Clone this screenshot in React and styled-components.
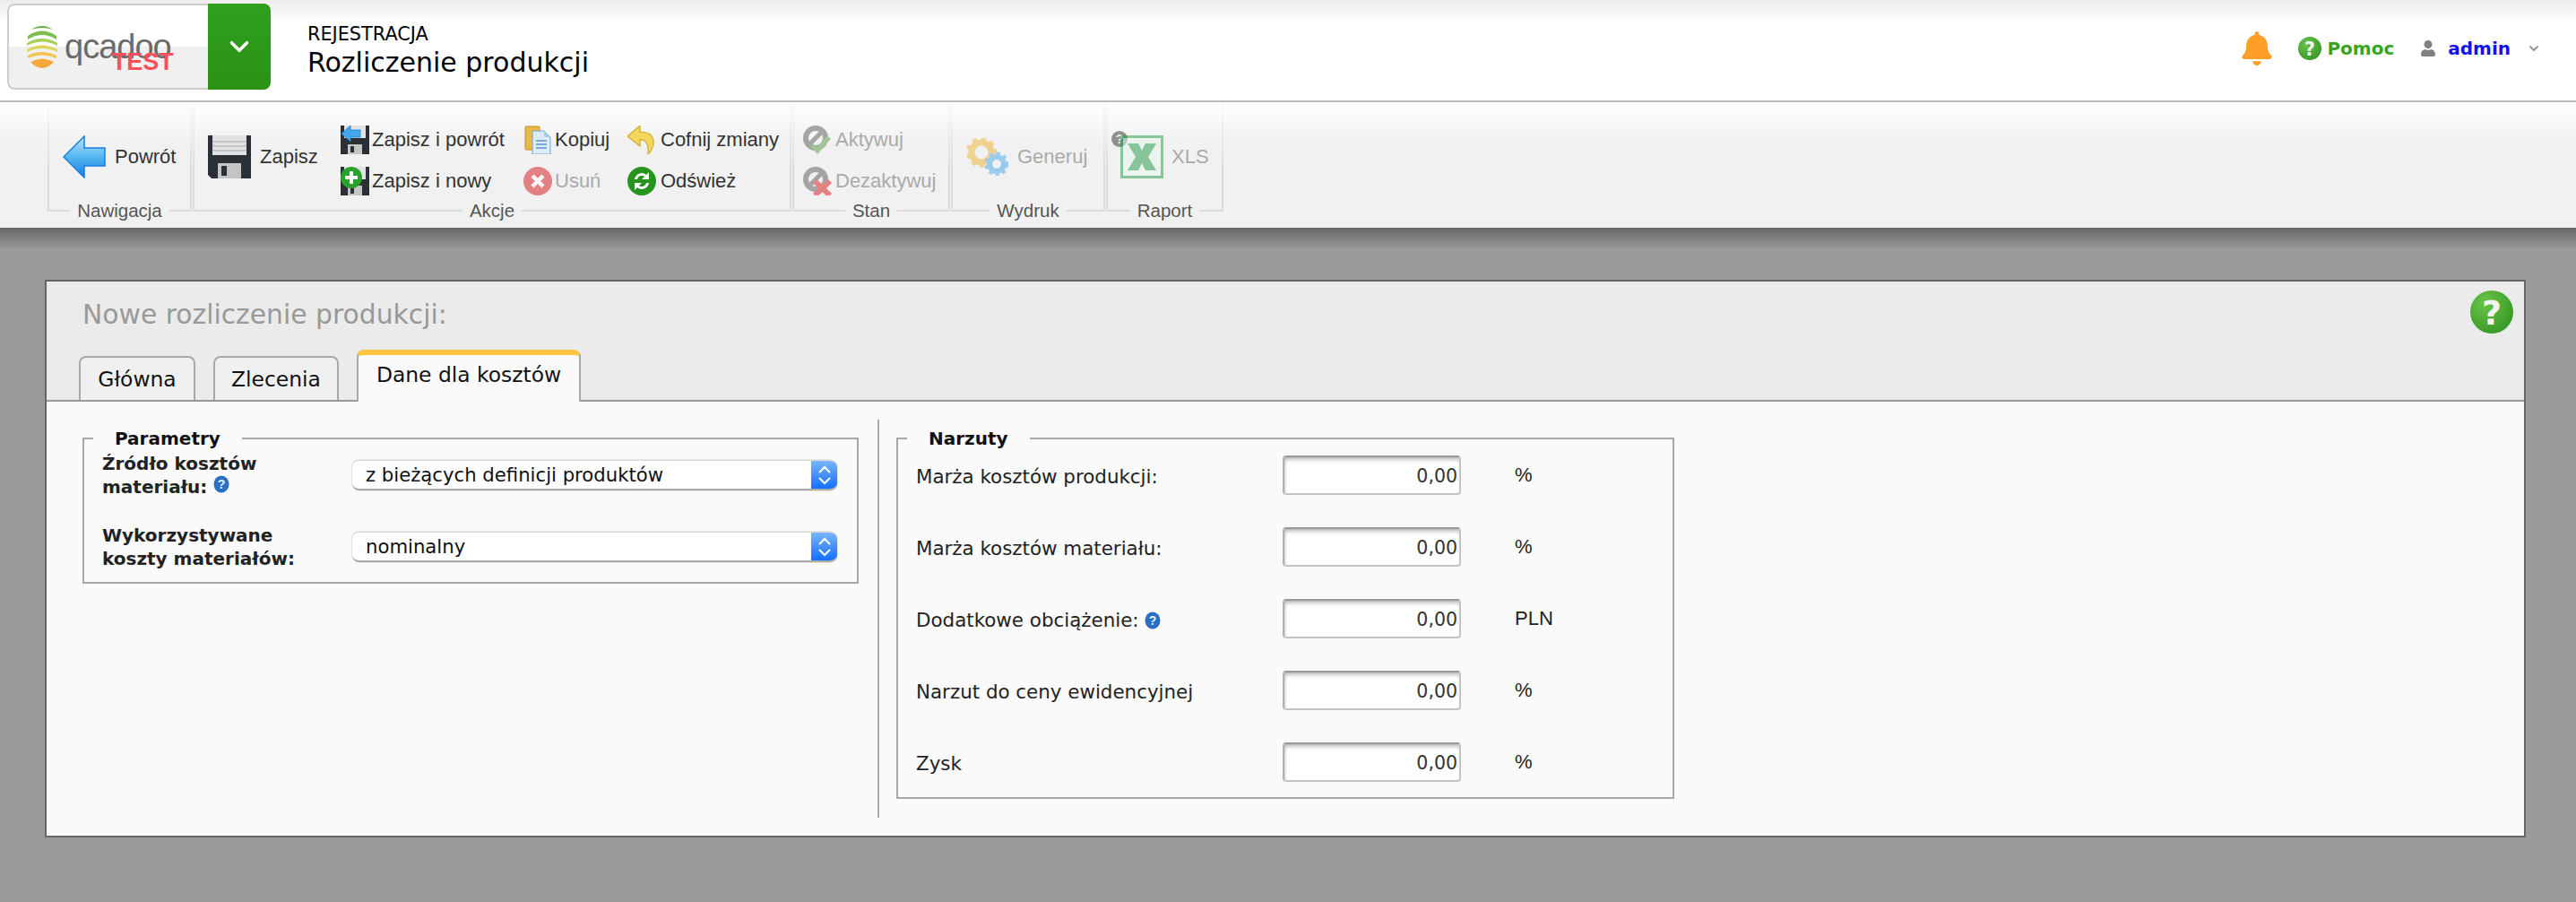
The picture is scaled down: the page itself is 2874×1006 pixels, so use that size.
import React from 'react';
import styled, { createGlobalStyle } from 'styled-components';
import { FaBell, FaUser } from 'react-icons/fa';
import { ChevronDown } from 'lucide-react';

const SANS = '"DejaVu Sans", "Noto Sans", sans-serif';
const HELV = '"Liberation Sans", Arial, sans-serif';

const GlobalStyle = createGlobalStyle`
  html, body { margin: 0; padding: 0; background: #9b9b9b; overflow: hidden; }
  * { box-sizing: border-box; }
  #root { min-height: 1006px; }
`;

const Page = styled.div`
  width: 2874px;
  height: 1006px;
  background: #9b9b9b;
  font-family: ${SANS};
`;

/* header */
const Header = styled.header`
  height: 114px;
  display: flex;
  align-items: flex-start;
  padding: 4px 39px 0 8px;
  border-bottom: 2px solid #bbb;
  background: linear-gradient(to bottom, #ececec 0, #ffffff 24px);
`;

const LogoBox = styled.div`
  width: 294px;
  height: 96px;
  display: flex;
  border-radius: 8px;
  overflow: hidden;
`;

const LogoLeft = styled.div`
  width: 224px;
  display: flex;
  align-items: center;
  gap: 8px;
  padding: 0 0 0 20px;
  border: 2px solid #ccc;
  border-right: 0;
  border-radius: 8px 0 0 8px;
  background: linear-gradient(to bottom, #ffffff 50%, #f0f0f0 50%);
`;

const LogoWord = styled.div`
  position: relative;
  font-family: ${HELV};
  font-size: 38px;
  letter-spacing: -1px;
  line-height: 44px;
  color: #6b6b6b;
`;

const LogoTest = styled.span`
  position: absolute;
  right: -3px;
  top: 25px;
  font-size: 27px;
  line-height: 28px;
  letter-spacing: 0;
  font-weight: 700;
  color: #f9505c;
`;

const LogoArrow = styled.div`
  width: 70px;
  display: flex;
  align-items: center;
  justify-content: center;
  background: linear-gradient(to bottom, #319f1e, #2b9313);
  color: #fff;
`;

const TitleBlock = styled.div`
  margin-left: 41px;
  padding-top: 19px;
  color: #000;
`;

const Crumb = styled.div`
  font-size: 20.8px;
  line-height: 30px;
`;

const PageName = styled.div`
  font-size: 30px;
  line-height: 34px;
`;

const HeaderRight = styled.div`
  margin-left: auto;
  margin-top: 30px;
  display: flex;
  align-items: center;
  height: 40px;
`;

const BellWrap = styled.span`
  display: flex;
  color: #ff9f28;
  margin-right: 27px;
`;

const HelpLink = styled.span`
  display: flex;
  align-items: center;
  gap: 6px;
  margin-right: 29px;
  font-size: 20px;
  font-weight: 700;
  color: #35a521;
`;

const UserWrap = styled.span`
  display: flex;
  color: #808080;
  margin-right: 13px;
`;

const AdminName = styled.span`
  font-size: 20px;
  font-weight: 700;
  color: #1111ee;
  margin-right: 18px;
`;

const UserCaret = styled.span`
  display: flex;
  color: #999;
`;

/* toolbar */
const Toolbar = styled.div`
  height: 140px;
  display: flex;
  padding: 2px 0 0 53px;
  background: linear-gradient(to bottom, #ffffff 0, #f1f1f1 46px);
`;

const Group = styled.div`
  position: relative;
  width: ${({ $w }) => $w}px;
  height: 120px;
  margin-right: 1px;
  padding: 0 0 0 ${({ $pad }) => $pad}px;
  display: flex;
  align-items: center;
  border: 2px solid #dedede;
  border-top: 0;
  border-image: linear-gradient(to bottom, #f9f9f9, #dcdcdc 60%) 1;
`;

const GroupFoot = styled.div`
  position: absolute;
  left: 0;
  right: 0;
  bottom: -13px;
  display: flex;
  justify-content: center;
`;

const GroupLabel = styled.span`
  padding: 0 8px;
  background: #f1f1f1;
  font-family: ${HELV};
  font-size: 20.5px;
  line-height: 24px;
  color: #555;
`;

const BigButton = styled.div`
  position: relative;
  display: flex;
  align-items: center;
  gap: ${({ $gap }) => $gap}px;
  width: ${({ $w }) => ($w ? `${$w}px` : 'auto')};
  font-family: ${HELV};
  font-size: 22px;
  color: ${({ $off }) => ($off ? '#aaa' : '#333')};
  svg { opacity: ${({ $off }) => ($off ? 0.5 : 1)}; }
`;

const SmallColumn = styled.div`
  display: flex;
  flex-direction: column;
  gap: 14px;
  padding-top: 8px;
  width: ${({ $w }) => ($w ? `${$w}px` : 'auto')};
`;

const SmallButton = styled.div`
  display: flex;
  align-items: center;
  gap: ${({ $gap }) => $gap || 3}px;
  height: 32px;
  font-family: ${HELV};
  font-size: 22px;
  white-space: nowrap;
  color: ${({ $off }) => ($off ? '#aaa' : '#333')};
  svg { opacity: ${({ $off }) => ($off ? 0.55 : 1)}; }
`;

const QuestionBadge = styled.span`
  position: absolute;
  left: -10px;
  top: -5px;
  width: 18px;
  height: 18px;
  border-radius: 50%;
  background: #8f8f8f;
  color: #eee;
  font-family: ${HELV};
  font-size: 14px;
  font-weight: 700;
  line-height: 18px;
  text-align: center;
`;

const Shade = styled.div`
  height: 24px;
  background: linear-gradient(to bottom, #656565, #9b9b9b);
`;

/* form panel */
const Panel = styled.section`
  width: 2768px;
  height: 622px;
  margin: 34px 0 0 50px;
  border: 2px solid #666;
  background: #fafafa;
`;

const PanelHead = styled.div`
  height: 134px;
  display: flex;
  flex-direction: column;
  border-bottom: 2px solid #9a9a9a;
  background: #ebebeb;
`;

const TitleRow = styled.div`
  display: flex;
  justify-content: space-between;
  padding: 10px 12px 0 40px;
`;

const PanelTitle = styled.h1`
  margin: 3px 0 0;
  font-size: 29.8px;
  font-weight: 400;
  line-height: 48px;
  color: #999;
`;

const Tabs = styled.div`
  margin-top: auto;
  margin-bottom: -2px;
  display: flex;
  align-items: flex-end;
  gap: 20px;
  padding-left: 36px;
`;

const Tab = styled.div`
  width: ${({ $w }) => $w}px;
  height: ${({ $active }) => ($active ? 58 : 49)}px;
  margin-bottom: ${({ $active }) => ($active ? 0 : 2)}px;
  padding-top: ${({ $active }) => ($active ? 7 : 9)}px;
  text-align: center;
  font-size: 23.4px;
  line-height: 30px;
  color: #111;
  background: ${({ $active }) => ($active ? '#fafafa' : '#f0f0f0')};
  border: 2px solid #a8a8a8;
  border-bottom: 0;
  border-top: ${({ $active }) => ($active ? '6px solid #ffc63e' : '2px solid #a8a8a8')};
  border-radius: 8px 8px 0 0;
`;

const PanelBody = styled.div`
  display: flex;
  align-items: flex-start;
  padding: 20px 0 0 40px;
`;

const Box = styled.fieldset`
  width: ${({ $w }) => $w}px;
  margin: 9px 0 0;
  padding: ${({ $pt }) => $pt}px 21px ${({ $pb }) => $pb}px 20px;
  border: 2px solid #a8a8a8;
  display: flex;
  flex-direction: column;
`;

const BoxTitle = styled.legend`
  margin-left: -10px;
  padding: 0 24px;
  font-size: 20px;
  font-weight: 700;
  line-height: 24px;
  color: #111;
`;

const Divider = styled.div`
  width: 2px;
  height: 444px;
  margin: 0 19px 0 21px;
  background: #aaa;
`;

const SelectRow = styled.div`
  display: grid;
  grid-template-columns: 279px 541px;
  align-items: center;
  margin-bottom: ${({ $last }) => ($last ? 0 : 28)}px;
`;

const StrongLabel = styled.label`
  font-size: 20px;
  font-weight: 700;
  line-height: 26px;
  color: #222;
`;

const Select = styled.div`
  height: 34px;
  display: flex;
  border-radius: 8px;
  overflow: hidden;
  background: #fff;
  border-top: 1px solid #d8d8d8;
  border-bottom: 2px solid #aaa;
  box-shadow: 0 0 0 1px #e4e4e4;
`;

const SelectText = styled.span`
  flex: 1;
  padding-left: 15px;
  font-size: 21.2px;
  line-height: 32px;
  color: #111;
`;

const SelectArrows = styled.span`
  width: 29px;
  margin: -1px 0 -2px;
  display: flex;
  align-items: center;
  justify-content: center;
  background: linear-gradient(to bottom, #7db7fa, #0d6bff);
`;

const InputRow = styled.div`
  display: grid;
  grid-template-columns: 409px 199px auto;
  column-gap: 0;
  align-items: center;
  margin-bottom: ${({ $last }) => ($last ? 0 : 36)}px;
`;

const PlainLabel = styled.label`
  display: flex;
  align-items: center;
  gap: 6px;
  margin-top: 3px;
  font-size: 21.4px;
  color: #222;
`;

const NumberInput = styled.input`
  width: 199px;
  height: 44px;
  padding: 2px 2px 0 0;
  text-align: right;
  font-family: ${SANS};
  font-size: 20.5px;
  color: #333;
  background: #fff;
  border: 2px solid #c4c4c4;
  border-top-color: #9a9a9a;
  border-left-color: #b0b0b0;
  border-radius: 4px;
  box-shadow: inset 0 5px 5px -3px #aaa, inset 3px 0 3px -2px #ccc;
  outline: none;
`;

const Unit = styled.span`
  margin: 0 0 0 60px;
  font-family: ${HELV};
  font-size: 22px;
  color: #222;
`;

/* drawings */
const BlueInfo = () => (
  <svg width="18" height="20" viewBox="0 0 18 20">
    <ellipse cx="9" cy="10" rx="8.5" ry="9.5" fill="#2a6fc4" />
    <text x="9" y="15" textAnchor="middle" fontSize="14" fontWeight="700" fontFamily="Liberation Sans" fill="#e8f1ff">?</text>
  </svg>
);

const GreenHelp = ({ size }) => (
  <svg width={size} height={size} viewBox="0 0 48 48">
    <defs>
      <radialGradient id={`gh${size}`} cx="0.35" cy="0.3" r="0.85">
        <stop offset="0" stopColor="#6cc44a" />
        <stop offset="1" stopColor="#2f9320" />
      </radialGradient>
    </defs>
    <circle cx="24" cy="24" r="24" fill={`url(#gh${size})`} />
    <text x="24" y="38" textAnchor="middle" fontSize="38" fontWeight="700" fontFamily="DejaVu Sans" fill="#f4f4f4">?</text>
  </svg>
);

const LogoMark = () => (
  <svg width="34" height="48" viewBox="0 0 34 48">
    <path d="M5 5Q17 -3 29 5Q17 1 5 5Z" fill="#5fae3a" />
    <path d="M1 12Q17 1 33 12Q33 15 33 16Q17 6 1 16Z" fill="#7cc04b" />
    <path d="M0 20Q17 10 34 20V23Q17 14 0 23Z" fill="#a6cf56" />
    <path d="M0 27Q17 18 34 27V30Q17 22 0 30Z" fill="#d9d858" />
    <path d="M1 34Q17 26 33 34V37Q17 30 1 37Z" fill="#f7c24c" />
    <path d="M4 41Q17 34 30 41Q24 48 17 48Q10 48 4 41Z" fill="#f6a73e" />
  </svg>
);

const BackArrow = () => (
  <svg width="48" height="48" viewBox="0 0 48 48">
    <defs>
      <linearGradient id="ba" x1="0" y1="0" x2="0" y2="1">
        <stop offset="0" stopColor="#bfe6fb" />
        <stop offset="0.5" stopColor="#56b6f2" />
        <stop offset="1" stopColor="#1580e0" />
      </linearGradient>
    </defs>
    <path d="M24 1L1 24L24 47V34H47V14H24Z" fill="url(#ba)" stroke="#1a7fdc" strokeWidth="1.5" />
  </svg>
);

const Floppy = ({ size = 48 }) => (
  <svg width={size} height={size} viewBox="0 0 48 48">
    <path d="M0 0H48V48H4L0 44Z" fill="#2b2f36" />
    <rect x="5" y="0" width="38" height="22" fill="#dfe1e3" />
    <path d="M5 7H43M5 12H43M5 17H43" stroke="#bcbcbc" strokeWidth="1.5" />
    <rect x="11" y="31" width="26" height="17" fill="#c4c4c4" />
    <rect x="15" y="34" width="6" height="11" fill="#2b2f36" />
  </svg>
);

const SmallFloppyBack = () => (
  <svg width="32" height="32" viewBox="0 0 32 32">
    <path d="M0 0H32V32H0Z" fill="#2b2f36" />
    <rect x="4" y="0" width="24" height="14" fill="#dfe1e3" />
    <rect x="8" y="21" width="16" height="11" fill="#c4c4c4" />
    <rect x="11" y="23" width="4" height="7" fill="#2b2f36" />
    <path d="M11 0L1 9L11 18V13H22V5H11Z" fill="#45a6ec" stroke="#1a7fdc" strokeWidth="0.8" />
  </svg>
);

const SmallFloppyPlus = () => (
  <svg width="32" height="32" viewBox="0 0 32 32">
    <path d="M0 0H32V32H0Z" fill="#2b2f36" />
    <rect x="4" y="0" width="24" height="14" fill="#dfe1e3" />
    <rect x="8" y="21" width="16" height="11" fill="#c4c4c4" />
    <rect x="11" y="23" width="4" height="7" fill="#2b2f36" />
    <circle cx="12" cy="12" r="12" fill="#27a32a" />
    <path d="M12 5V19M5 12H19" stroke="#fff" strokeWidth="4" />
  </svg>
);

const CopyIcon = () => (
  <svg width="32" height="32" viewBox="0 0 32 32">
    <rect x="2" y="1" width="16" height="26" rx="1" fill="#e9b949" stroke="#c98f22" />
    <path d="M10 6H23L30 13V32H10Z" fill="#dcebf8" stroke="#6ea4d6" />
    <path d="M23 6V13H30Z" fill="#a9cbe8" />
    <path d="M14 17H26M14 21H26M14 25H26" stroke="#5d93c8" strokeWidth="1.6" />
  </svg>
);

const DeleteIcon = () => (
  <svg width="32" height="32" viewBox="0 0 32 32">
    <circle cx="16" cy="16" r="16" fill="#d8262c" />
    <path d="M10 10L22 22M22 10L10 22" stroke="#fff" strokeWidth="4.5" />
  </svg>
);

const UndoIcon = () => (
  <svg width="32" height="32" viewBox="0 0 32 32">
    <path d="M14 0L0 12L14 23V16C21 15 24 21 23 32C31 25 34 7 14 7Z" fill="#f5d65c" stroke="#cda92c" strokeWidth="1.2" />
  </svg>
);

const RefreshIcon = () => (
  <svg width="32" height="32" viewBox="0 0 32 32">
    <circle cx="16" cy="16" r="16" fill="#26941f" />
    <path d="M8 14A8 8 0 0 1 21 9L24 6V14H16L19 11A5 5 0 0 0 11 14Z" fill="#fff" />
    <path d="M24 18A8 8 0 0 1 11 23L8 26V18H16L13 21A5 5 0 0 0 21 18Z" fill="#fff" />
  </svg>
);

const ActivateIcon = () => (
  <svg width="32" height="32" viewBox="0 0 32 32">
    <circle cx="14" cy="14" r="11" fill="none" stroke="#666" strokeWidth="6" />
    <path d="M5 23L23 5" stroke="#666" strokeWidth="5" />
    <path d="M10 22L16 28L29 13" fill="none" stroke="#5ea44a" strokeWidth="5" />
  </svg>
);

const DeactivateIcon = () => (
  <svg width="32" height="32" viewBox="0 0 32 32">
    <circle cx="14" cy="14" r="11" fill="none" stroke="#666" strokeWidth="6" />
    <path d="M5 23L23 5" stroke="#666" strokeWidth="5" />
    <path d="M13 16L30 32M30 16L13 32" stroke="#d8262c" strokeWidth="6" />
  </svg>
);

const GearsIcon = () => (
  <svg width="46" height="42" viewBox="0 0 46 42">
    <circle cx="16" cy="16" r="11" fill="none" stroke="#eeb42c" strokeWidth="7" />
    <circle cx="16" cy="16" r="15" fill="none" stroke="#eeb42c" strokeWidth="4" strokeDasharray="5 5" />
    <circle cx="33" cy="29" r="8" fill="none" stroke="#43a8e8" strokeWidth="6" />
    <circle cx="33" cy="29" r="12" fill="none" stroke="#43a8e8" strokeWidth="3" strokeDasharray="4 4" />
  </svg>
);

const ExcelIcon = () => (
  <svg width="48" height="48" viewBox="0 0 48 48">
    <rect x="1.5" y="1.5" width="45" height="45" fill="#e8f3ea" stroke="#1e9a45" strokeWidth="3" />
    <path d="M8 9H20L24 17L28 9H40L31 24L40 39H28L24 31L20 39H8L17 24Z" fill="#1e9a45" />
  </svg>
);

const SelectChevrons = () => (
  <svg width="16" height="24" viewBox="0 0 16 24" fill="none" stroke="#fff" strokeWidth="2">
    <path d="M2 9L8 3L14 9M2 15L8 21L14 15" />
  </svg>
);

const rows = [
  { label: 'Marża kosztów produkcji:', unit: '%' },
  { label: 'Marża kosztów materiału:', unit: '%' },
  { label: 'Dodatkowe obciążenie:', unit: 'PLN', info: true },
  { label: 'Narzut do ceny ewidencyjnej', unit: '%' },
  { label: 'Zysk', unit: '%' },
];

const App = () => (
  <Page>
    <GlobalStyle />
    <Header>
      <LogoBox>
        <LogoLeft>
          <LogoMark />
          <LogoWord>
            qcadoo
            <LogoTest>TEST</LogoTest>
          </LogoWord>
        </LogoLeft>
        <LogoArrow>
          <ChevronDown size={34} strokeWidth={2.5} />
        </LogoArrow>
      </LogoBox>
      <TitleBlock>
        <Crumb>REJESTRACJA</Crumb>
        <PageName>Rozliczenie produkcji</PageName>
      </TitleBlock>
      <HeaderRight>
        <BellWrap><FaBell size={38} /></BellWrap>
        <HelpLink><GreenHelp size={26} />Pomoc</HelpLink>
        <UserWrap><FaUser size={18} /></UserWrap>
        <AdminName>admin</AdminName>
        <UserCaret><ChevronDown size={16} strokeWidth={3} /></UserCaret>
      </HeaderRight>
    </Header>

    <Toolbar>
      <Group $w={161} $pad={15}>
        <BigButton $gap={10}><BackArrow />Powrót</BigButton>
        <GroupFoot><GroupLabel>Nawigacja</GroupLabel></GroupFoot>
      </Group>
      <Group $w={668} $pad={15}>
        <BigButton $gap={10} $w={148}><Floppy />Zapisz</BigButton>
        <SmallColumn $w={204}>
          <SmallButton><SmallFloppyBack />Zapisz i powrót</SmallButton>
          <SmallButton><SmallFloppyPlus />Zapisz i nowy</SmallButton>
        </SmallColumn>
        <SmallColumn $w={116}>
          <SmallButton><CopyIcon />Kopiuj</SmallButton>
          <SmallButton $off><DeleteIcon />Usuń</SmallButton>
        </SmallColumn>
        <SmallColumn>
          <SmallButton $gap={5}><UndoIcon />Cofnij zmiany</SmallButton>
          <SmallButton $gap={5}><RefreshIcon />Odśwież</SmallButton>
        </SmallColumn>
        <GroupFoot><GroupLabel>Akcje</GroupLabel></GroupFoot>
      </Group>
      <Group $w={176} $pad={10}>
        <SmallColumn>
          <SmallButton $off $gap={4}><ActivateIcon />Aktywuj</SmallButton>
          <SmallButton $off $gap={4}><DeactivateIcon />Dezaktywuj</SmallButton>
        </SmallColumn>
        <GroupFoot><GroupLabel>Stan</GroupLabel></GroupFoot>
      </Group>
      <Group $w={172} $pad={16}>
        <BigButton $off $gap={10}><GearsIcon />Generuj</BigButton>
        <GroupFoot><GroupLabel>Wydruk</GroupLabel></GroupFoot>
      </Group>
      <Group $w={131} $pad={14}>
        <BigButton $off $gap={9}>
          <QuestionBadge>?</QuestionBadge>
          <ExcelIcon />XLS
        </BigButton>
        <GroupFoot><GroupLabel>Raport</GroupLabel></GroupFoot>
      </Group>
    </Toolbar>
    <Shade />

    <Panel>
      <PanelHead>
        <TitleRow>
          <PanelTitle>Nowe rozliczenie produkcji:</PanelTitle>
          <GreenHelp size={48} />
        </TitleRow>
        <Tabs>
          <Tab $w={130}>Główna</Tab>
          <Tab $w={140}>Zlecenia</Tab>
          <Tab $w={250} $active>Dane dla kosztów</Tab>
        </Tabs>
      </PanelHead>
      <PanelBody>
        <Box $w={866} $pt={3} $pb={13}>
          <BoxTitle>Parametry</BoxTitle>
          <SelectRow>
            <StrongLabel>Źródło kosztów<br />materiału: <BlueInfo /></StrongLabel>
            <Select>
              <SelectText>z bieżących definicji produktów</SelectText>
              <SelectArrows><SelectChevrons /></SelectArrows>
            </Select>
          </SelectRow>
          <SelectRow $last>
            <StrongLabel>Wykorzystywane<br />koszty materiałów:</StrongLabel>
            <Select>
              <SelectText>nominalny</SelectText>
              <SelectArrows><SelectChevrons /></SelectArrows>
            </Select>
          </SelectRow>
        </Box>
        <Divider />
        <Box $w={868} $pt={7} $pb={17}>
          <BoxTitle>Narzuty</BoxTitle>
          {rows.map((row, i) => (
            <InputRow key={row.label} $last={i === rows.length - 1}>
              <PlainLabel>{row.label}{row.info && <BlueInfo />}</PlainLabel>
              <NumberInput readOnly value="0,00" />
              <Unit>{row.unit}</Unit>
            </InputRow>
          ))}
        </Box>
      </PanelBody>
    </Panel>
  </Page>
);

export default App;
